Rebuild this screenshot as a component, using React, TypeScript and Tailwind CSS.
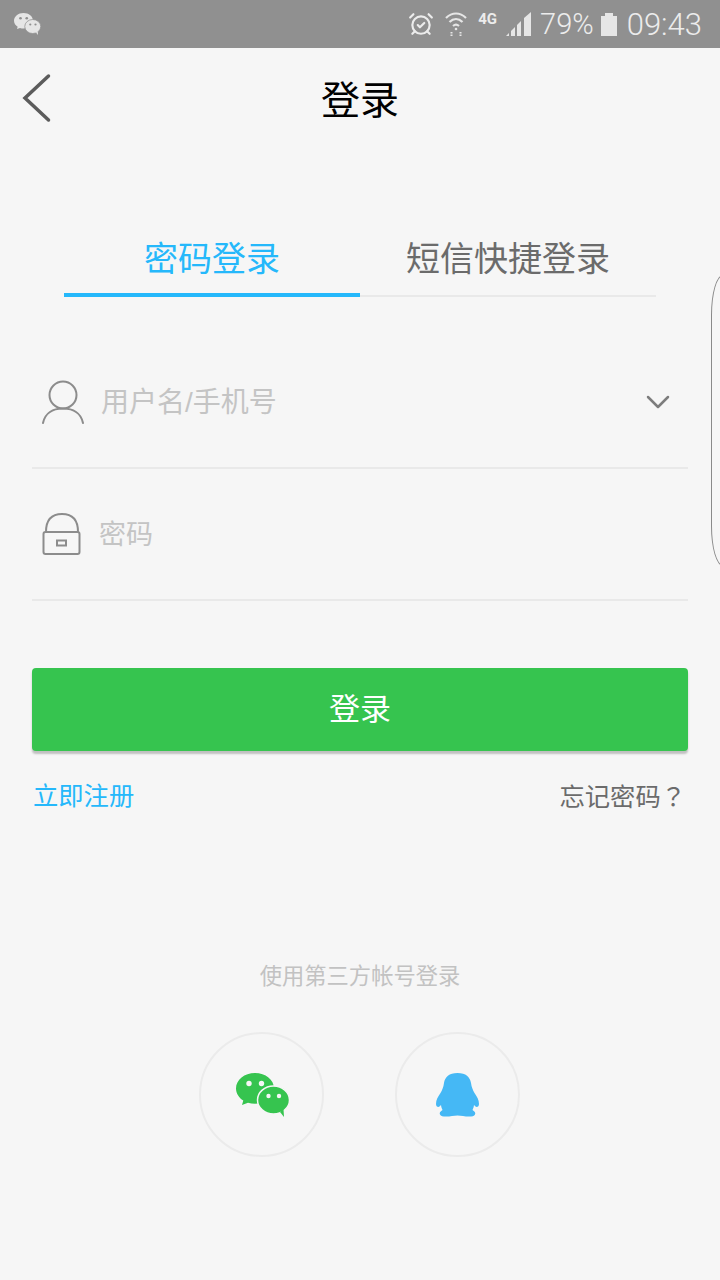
import { AlarmClockCheck, ChevronDown } from 'lucide-react';

function Wechat({ fill, cut, className }: { fill: string; cut: string; className?: string }) {
  return (
    <svg viewBox="0 0 54 44" className={className}>
      <path
        d="M19 0C8.500 0 0 6.800 0 15.500C0 20.500 2.900 24.700 7.300 27.500L6 32L12 29.800C14.200 30.500 16.500 30.800 19 30.800C29.500 30.800 38 23.900 38 15.400C38 6.800 29.500 0 19 0Z"
        fill={fill}
      />
      <ellipse cx="37.500" cy="27" rx="16" ry="14" fill={fill} stroke={cut} strokeWidth="1.500" />
      <path d="M44 39L48 44L47.500 36Z" fill={fill} />
      <circle cx="13" cy="10.500" r="2.700" fill={cut} />
      <circle cx="25.500" cy="10.500" r="2.700" fill={cut} />
      <circle cx="32.500" cy="23" r="2.200" fill={cut} />
      <circle cx="43" cy="23" r="2.200" fill={cut} />
    </svg>
  );
}

function Penguin({ className }: { className?: string }) {
  return (
    <svg viewBox="0 0 43 44" className={className}>
      <path
        d="M21.500 0C30 0 34 4 35 10C35.500 14 37 17.500 38.500 20C41 23.500 43 27 43 31C43 33.500 41 34.500 39.500 33.500L38 32C37.800 34 37.200 35.500 36.500 37C39 38.500 39.800 40 39 41.500C38 44 32 44 27 43L21.500 42.500L16 43C11 44 5 44 4 41.500C3.200 40 4 38.500 6.500 37C5.800 35.500 5.200 34 5 32L3.500 33.500C2 34.500 0 33.500 0 31C0 27 2 23.500 4.500 20C6 17.500 7.500 14 8 10C9 4 13 0 21.500 0Z"
        fill="#45b8f5"
      />
    </svg>
  );
}

function StatusBar() {
  return (
    <div className="flex h-12 items-center justify-between bg-[#909090] pl-[14px] pr-[18px] text-[#ececec]">
      <Wechat fill="#e6e6e6" cut="#909090" className="h-[22px] w-[27px]" />
      <div className="flex items-center">
        <AlarmClockCheck className="h-[26px] w-[26px]" strokeWidth={2} />
        <svg viewBox="0 0 22 26" className="ml-[11px] h-[26px] w-[22px]" fill="none" stroke="#e6e6e6" strokeWidth="2.200">
          <path d="M1 7C7 1 15 1 21 7" />
          <path d="M4.500 11C8.500 7 13.500 7 17.500 11" />
          <path d="M8 15C10 13.300 12 13.300 14 15" />
          <circle cx="11" cy="18" r="1.300" fill="#e6e6e6" stroke="none" />
          <path d="M6.500 21V26M15.500 21V26" strokeWidth="2" strokeDasharray="1.500 1" />
        </svg>
        <span className="ml-[11px] mb-[9px] font-['Roboto',sans-serif] text-[15px] font-bold leading-none">4G</span>
        <svg viewBox="0 0 25 24" className="ml-[9px] h-[24px] w-[25px]" fill="#e6e6e6">
          <path d="M0 24L3 21V24Z" />
          <path d="M5 19L9 15V24H5Z" />
          <path d="M11 13L15 9V24H11Z" />
          <path d="M18 6L25 0V24H18Z" />
        </svg>
        <span className="ml-[9px] font-['Roboto',sans-serif] text-[29px] font-light leading-none">79%</span>
        <div className="ml-[7px] flex flex-col items-center">
          <div className="h-[3px] w-[8px] bg-[#e6e6e6]" />
          <div className="h-[20px] w-[16px] bg-[#e6e6e6]" />
        </div>
        <span className="ml-[10px] font-['Roboto',sans-serif] text-[31px] font-light leading-none">09:43</span>
      </div>
    </div>
  );
}

function Field({ icon, label, className, trailing }: { icon: React.ReactNode; label: string; className: string; trailing?: React.ReactNode }) {
  return (
    <div className="flex h-[132px] items-center border-b-2 border-[#e9e9e9]">
      {icon}
      <span className={className}>{label}</span>
      {trailing}
    </div>
  );
}

export default function App() {
  return (
    <div className="relative h-[1280px] w-[720px] overflow-hidden bg-[#f6f6f6] font-['Liberation_Sans','Noto_Sans_CJK_SC',sans-serif]">
      <StatusBar />

      <div className="relative flex h-[104px] items-center justify-center">
        <svg viewBox="0 0 30 50" className="absolute left-[22px] top-[25px] h-[50px] w-[30px]" fill="none" stroke="#5c5c5c" strokeWidth="3.500" strokeLinecap="round">
          <path d="M26.500 3L3 25L26.500 47" />
        </svg>
        <h1 className="text-[39px] font-normal leading-none text-black">登录</h1>
      </div>

      <div className="mx-16 mt-16 flex h-[81px] border-b-2 border-[#e9e9e9] text-[34px] leading-none">
        <div className="-mb-[2px] flex h-[81px] flex-1 items-center justify-center border-b-4 border-[#25b8fb] text-[#25b8fb]">
          <span className="mt-[8px]">密码登录</span>
        </div>
        <div className="flex flex-1 items-center justify-center text-[#6b6b6b]">
          <span className="mt-[6px]">短信快捷登录</span>
        </div>
      </div>

      <div className="mx-8 mt-10">
        <Field
          icon={
            <svg viewBox="0 0 42 44" className="ml-[10px] h-[44px] w-[42px]" fill="none" stroke="#8c8c8c" strokeWidth="2">
              <circle cx="21" cy="15" r="13.500" />
              <path d="M1 43C3 33 11 28.500 21 28.500C31 28.500 39 33 41 43" strokeLinecap="round" />
            </svg>
          }
          label="用户名/手机号"
          className="ml-[17px] mt-[2px] flex-1 text-[28px] leading-none text-[#c4c4c4]"
          trailing={<ChevronDown className="mr-[10px] h-[40px] w-[40px] text-[#7d7d7d]" strokeWidth={1.500} />}
        />
        <Field
          icon={
            <svg viewBox="0 0 40 44" className="ml-[10px] h-[44px] w-[40px]" fill="none" stroke="#8c8c8c" strokeWidth="2">
              <path d="M4 20C4 8 10 2 20 2C30 2 36 8 36 20" />
              <rect x="1.500" y="20" width="36" height="22" rx="2" />
              <rect x="15" y="28.500" width="9" height="5" />
            </svg>
          }
          label="密码"
          className="ml-[17px] mt-[2px] text-[27px] leading-none text-[#c4c4c4]"
        />
      </div>

      <button className="mx-8 mt-[67px] flex h-[83px] w-[656px] items-center justify-center rounded-[4px] bg-[#36c44f] text-[31px] leading-none text-white shadow-[0_3px_2px_rgba(0,0,0,0.22)]">
        登录
      </button>

      <div className="mx-8 mt-7 flex h-9 items-center justify-between pl-[1px] pr-[2px] text-[25.300px] leading-none">
        <span className="text-[#25b8fb]">立即注册</span>
        <span className="text-[#6b6b6b]">
          忘记密码<span className="font-['Noto_Sans_CJK_TC',sans-serif]">？</span>
        </span>
      </div>

      <p className="mt-[146px] text-center text-[22.300px] leading-8 text-[#c2c2c2]">使用第三方帐号登录</p>

      <div className="mt-[39px] flex justify-center gap-[71px] pr-[1px]">
        <div className="flex h-[125px] w-[125px] items-center justify-center rounded-full border-2 border-[#ebebeb]">
          <Wechat fill="#36c44f" cut="#f6f6f6" className="ml-[2px] h-[44px] w-[54px]" />
        </div>
        <div className="flex h-[125px] w-[125px] items-center justify-center rounded-full border-2 border-[#ebebeb]">
          <Penguin className="h-[44px] w-[43px]" />
        </div>
      </div>

      {/* edge handle that sits over the page */}
      <div className="absolute left-[711px] top-[275px] h-[291px] w-[20px] rounded-[12px_0_0_12px/40px_0_0_40px] border border-[#8a8a8a]" />
    </div>
  );
}
